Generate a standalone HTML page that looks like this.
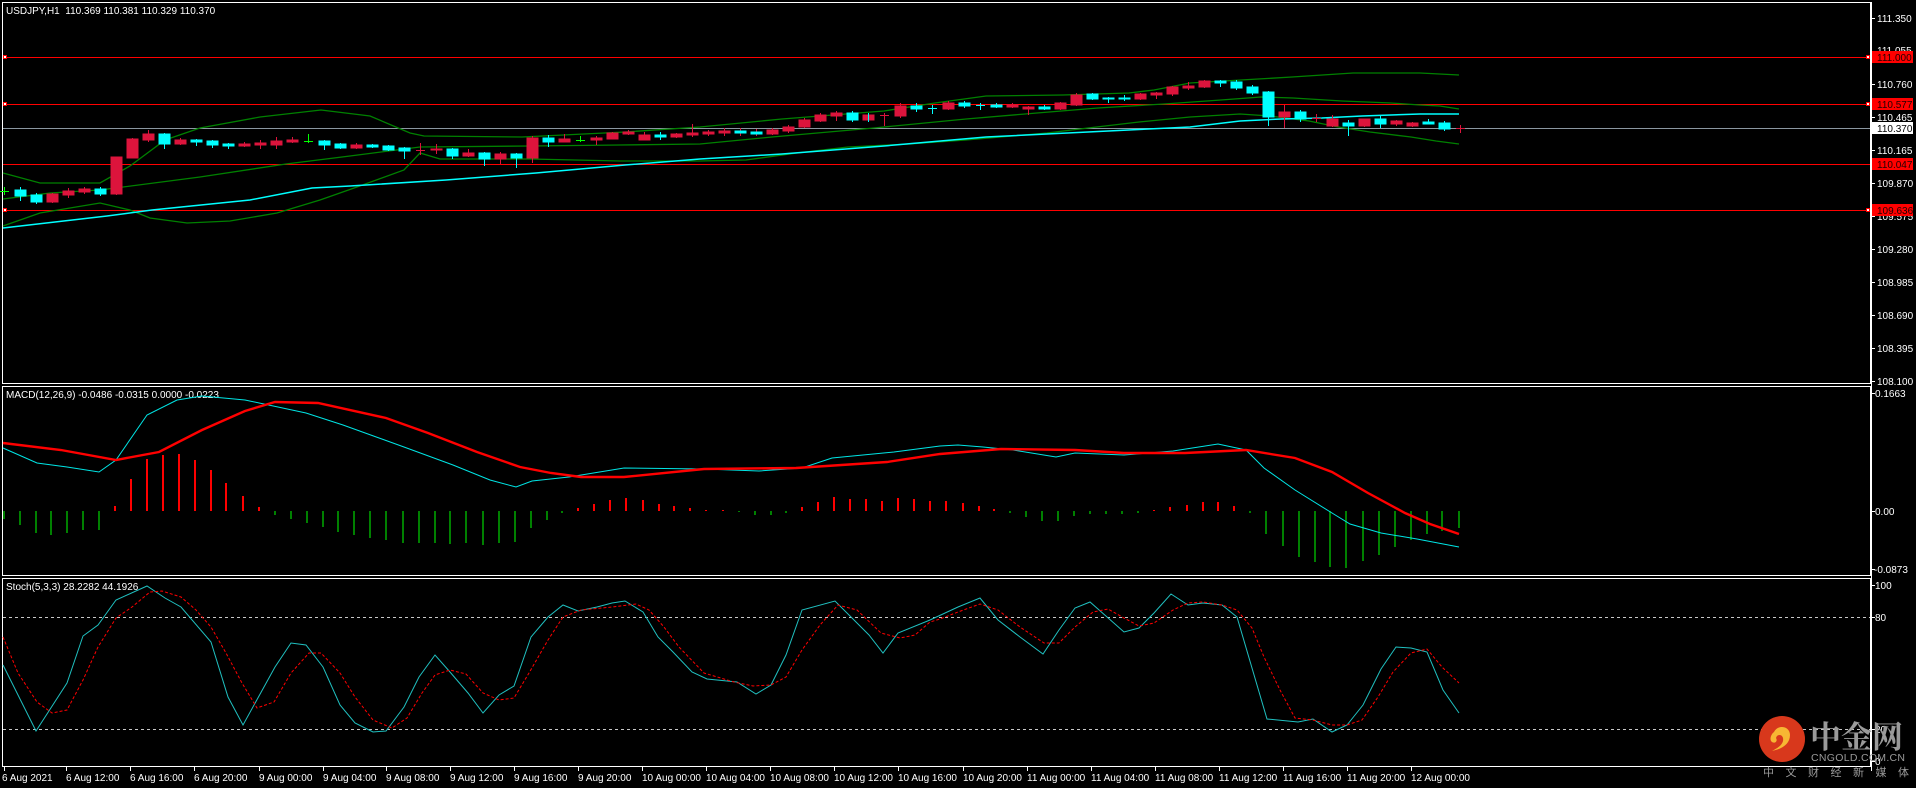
<!DOCTYPE html>
<html><head><meta charset="utf-8"><style>
html,body{margin:0;padding:0;background:#000;width:1916px;height:788px;overflow:hidden}
svg{display:block}
text{font-family:"Liberation Sans",sans-serif;font-size:10px;fill:#fff}
</style></head><body>
<svg width="1916" height="788" viewBox="0 0 1916 788" xmlns="http://www.w3.org/2000/svg" shape-rendering="crispEdges">
<rect width="1916" height="788" fill="#000"/>
<g fill="none" stroke="#fff" stroke-width="1">
<rect x="2.5" y="2.5" width="1868" height="381"/>
<rect x="2.5" y="386.5" width="1868" height="189"/>
<rect x="2.5" y="578.5" width="1868" height="188"/>
</g>
<g stroke="#ff0000" stroke-width="1.3">
<line x1="3" y1="57.5" x2="1870" y2="57.5"/>
<line x1="3" y1="104.5" x2="1870" y2="104.5"/>
<line x1="3" y1="164.5" x2="1870" y2="164.5"/>
<line x1="3" y1="210.5" x2="1870" y2="210.5"/>
</g>
<line x1="3" y1="128.5" x2="1870" y2="128.5" stroke="#8a96a0" stroke-width="1"/>
<g fill="#fff" stroke="#f00" stroke-width="1">
<rect x="3.5" y="55.5" width="3" height="3"/><rect x="3.5" y="102.5" width="3" height="3"/><rect x="3.5" y="208.5" width="3" height="3"/>
<rect x="1866.5" y="55.5" width="3" height="3"/><rect x="1866.5" y="102.5" width="3" height="3"/><rect x="1866.5" y="208.5" width="3" height="3"/>
</g>
<g fill="none" stroke="#008000" stroke-width="1.3" shape-rendering="auto">
<polyline points="3,173 40,183 100,183 130,166 165,140 200,128 260,117 321,110 370,116 410,133 424,136 522,137 625,132 700,127 782,119 884,111 935,103 986,96 1063,95 1129,93 1154,90 1190,83 1241,80 1292,77 1353,73 1420,73 1459,75"/>
<polyline points="3,199 50,193 100,190 200,177 286,164 350,156 420,147 530,146 620,145 700,144 772,137 874,128 966,119 1037,113 1098,108 1164,104 1221,100 1261,97 1293,98 1342,101 1391,103 1420,105 1440,106 1459,109"/>
<polyline points="3,226 40,213 100,203 130,210 150,218 187,223 230,221 277,213 320,200 357,187 404,170 420,153 440,159 530,159 620,161 700,161 746,160 797,153 848,147 909,144 966,140 1047,133 1088,128 1139,122 1190,117 1240,114 1270,116 1309,121 1338,127 1370,132 1411,137 1436,141 1459,144"/>
</g>
<polyline fill="none" stroke="#00ffff" stroke-width="1.5" shape-rendering="auto" points="3,228 107,216 152,210 250,200 312,188 350,186 446,180 536,173 625,165 700,159 782,154 884,146 986,137 1088,132 1190,127 1240,121 1281,119 1322,118 1362,116 1420,114 1459,114"/>
<g stroke-width="1">
<g stroke="#00ff00"><path d="M4.5 187V195M0 191.5H9M308.5 134V143M304 141.5H313M580.5 136V142M576 140.5H585"/></g>
<g stroke="#dc143c" fill="#dc143c">
<path d="M52.5 193V203M68.5 188V198M84.5 187V194M116.5 157V195M132.5 138V158M148.5 130V142M180.5 138V145M244.5 142V147M260.5 140V149M276.5 137V149M292.5 137V143M356.5 143V149M420.5 143V155M436.5 144V154M468.5 149V157M500.5 152V164M532.5 136V163M564.5 134V142M596.5 136V145M612.5 132V139M628.5 130V135M644.5 132V140M676.5 133V138M692.5 124V137M708.5 130V136M724.5 128V136M740.5 128V136M756.5 129V136M772.5 128V135M788.5 125V133M804.5 118V128M820.5 113V122M836.5 111V121M852.5 111V122M868.5 113V122M884.5 113V126M900.5 103V118M916.5 103V112M948.5 101V110M964.5 101V108M1012.5 103V108M1028.5 106V115M1060.5 102V110M1076.5 93V106M1140.5 93V100M1156.5 92V99M1172.5 86V96M1188.5 82V90M1204.5 80V88M1284.5 105V128M1316.5 114V122M1332.5 115V124M1348.5 120V126M1364.5 119V127M1380.5 116V126M1396.5 120V126M1412.5 122V127M1460.5 125V133"/>
<path d="M416 150.5H425M1312 118.5H1321M1456 128.5H1465M880 115.5H889"/>
<rect x="47" y="194" width="11" height="8"/><rect x="63" y="191" width="11" height="4"/><rect x="79" y="189" width="11" height="3"/><rect x="111" y="157" width="11" height="37"/><rect x="127" y="139" width="11" height="19"/><rect x="143" y="134" width="11" height="6"/><rect x="175" y="140" width="11" height="4"/><rect x="239" y="144" width="11" height="2"/><rect x="255" y="143" width="11" height="2"/><rect x="271" y="141" width="11" height="4"/><rect x="287" y="140" width="11" height="2"/><rect x="351" y="145" width="11" height="3"/><rect x="431" y="149" width="11" height="1"/><rect x="463" y="153" width="11" height="3"/><rect x="495" y="154" width="11" height="5"/><rect x="527" y="138" width="11" height="20"/><rect x="559" y="139" width="11" height="3"/><rect x="591" y="138" width="11" height="2"/><rect x="607" y="133" width="11" height="6"/><rect x="623" y="132" width="11" height="2"/><rect x="639" y="135" width="11" height="5"/><rect x="671" y="134" width="11" height="3"/><rect x="687" y="133" width="11" height="2"/><rect x="703" y="132" width="11" height="2"/><rect x="719" y="131" width="11" height="2"/><rect x="767" y="130" width="11" height="4"/><rect x="783" y="127" width="11" height="4"/><rect x="799" y="120" width="11" height="7"/><rect x="815" y="115" width="11" height="6"/><rect x="831" y="113" width="11" height="3"/><rect x="863" y="115" width="11" height="5"/><rect x="895" y="106" width="11" height="10"/><rect x="943" y="103" width="11" height="6"/><rect x="1007" y="105" width="11" height="2"/><rect x="1023" y="107" width="11" height="2"/><rect x="1055" y="103" width="11" height="6"/><rect x="1071" y="95" width="11" height="10"/><rect x="1135" y="94" width="11" height="5"/><rect x="1151" y="93" width="11" height="2"/><rect x="1167" y="87" width="11" height="7"/><rect x="1183" y="86" width="11" height="2"/><rect x="1199" y="81" width="11" height="6"/><rect x="1279" y="112" width="11" height="5"/><rect x="1359" y="119" width="11" height="7"/><rect x="1391" y="121" width="11" height="3"/><rect x="1407" y="123" width="11" height="3"/>
</g>
<g stroke="#00ffff" fill="#00ffff">
<path d="M20.5 187V201M36.5 193V204M100.5 187V196M164.5 133V149M196.5 139V146M212.5 140V148M228.5 143V149M324.5 140V150M340.5 143V149M372.5 144V148M388.5 145V151M404.5 147V159M452.5 148V159M484.5 152V166M516.5 153V168M548.5 135V147M660.5 132V140M852.5 111V122M868.5 113V122M916.5 103V112M932.5 105V114M964.5 101V108M980.5 103V110M996.5 103V108M1044.5 105V110M1092.5 93V100M1108.5 97V103M1124.5 95V101M1220.5 80V87M1236.5 80V90M1252.5 85V95M1268.5 91V126M1300.5 110V122M1348.5 120V136M1380.5 115V128M1428.5 119V124M1444.5 121V131M928 108.5H937M976 105.5H985"/>
<rect x="15" y="190" width="11" height="6"/><rect x="31" y="195" width="11" height="7"/><rect x="95" y="189" width="11" height="5"/><rect x="159" y="134" width="11" height="10"/><rect x="191" y="140" width="11" height="2"/><rect x="207" y="141" width="11" height="4"/><rect x="223" y="144" width="11" height="2"/><rect x="319" y="141" width="11" height="4"/><rect x="335" y="144" width="11" height="4"/><rect x="367" y="145" width="11" height="2"/><rect x="383" y="146" width="11" height="4"/><rect x="399" y="148" width="11" height="3"/><rect x="447" y="149" width="11" height="7"/><rect x="479" y="153" width="11" height="6"/><rect x="511" y="154" width="11" height="4"/><rect x="543" y="138" width="11" height="4"/><rect x="655" y="135" width="11" height="2"/><rect x="735" y="131" width="11" height="2"/><rect x="751" y="132" width="11" height="2"/><rect x="847" y="113" width="11" height="7"/><rect x="911" y="106" width="11" height="3"/><rect x="959" y="103" width="11" height="3"/><rect x="991" y="105" width="11" height="2"/><rect x="1039" y="107" width="11" height="2"/><rect x="1087" y="94" width="11" height="5"/><rect x="1103" y="98" width="11" height="1"/><rect x="1119" y="98" width="11" height="1"/><rect x="1215" y="81" width="11" height="2"/><rect x="1231" y="82" width="11" height="6"/><rect x="1247" y="87" width="11" height="6"/><rect x="1263" y="92" width="11" height="25"/><rect x="1295" y="112" width="11" height="7"/><rect x="1343" y="123" width="11" height="3"/><rect x="1375" y="119" width="11" height="5"/><rect x="1423" y="122" width="11" height="2"/><rect x="1439" y="123" width="11" height="6"/>
</g>
<g stroke="#dc143c" fill="#dc143c"><rect x="1327" y="119" width="11" height="7"/><path d="M1332.5 115V127"/></g>
</g>
<text x="6" y="14">USDJPY,H1&#160; 110.369 110.381 110.329 110.370</text>
<text x="6" y="398">MACD(12,26,9) -0.0486 -0.0315 0.0000 -0.0223</text>
<g stroke="#008000" stroke-width="2">
<path d="M4 511V519M20 511V525M36 511V533M51 511V535M67 511V533M83 511V530M99 511V530M275 511V515M291 511V519M307 511V523M323 511V527M338 511V532M354 511V535M370 511V538M386 511V540M403 511V543M419 511V543M435 511V543M450 511V544M466 511V543M483 511V545M499 511V543M515 511V542M531 511V528M547 511V520M562 511V513M739 511V512M755 511V515M771 511V515M786 511V513M1010 511V513M1026 511V517M1042 511V521M1058 511V521M1074 511V516M1090 511V514M1106 511V514M1122 511V514M1138 511V513M1250 511V513M1266 511V534M1283 511V546M1299 511V557M1315 511V562M1330 511V567M1346 511V568M1363 511V561M1379 511V555M1395 511V547M1411 511V540M1427 511V534M1442 511V531M1459 511V528"/>
</g>
<g stroke="#ff0000" stroke-width="2">
<path d="M115 511V506M131 511V479M147 511V459M163 511V455M179 511V454M195 511V460M211 511V470M226 511V483M243 511V496M259 511V507M578 511V508M594 511V504M610 511V500M626 511V498M643 511V500M659 511V504M674 511V506M690 511V508M706 511V510M723 511V510M802 511V507M818 511V502M834 511V497M850 511V499M866 511V499M882 511V501M898 511V498M914 511V499M930 511V501M946 511V501M963 511V503M979 511V506M994 511V509M1154 511V510M1170 511V507M1187 511V505M1203 511V502M1218 511V502M1234 511V506"/>
</g>
<polyline fill="none" stroke="#00e5e5" stroke-width="1" shape-rendering="auto" points="3,448 37,463 67,467 99,472 116,460 147,415 177,400 202,396 245,400 306,413 343,425 404,447 453,465 490,480 516,487 532,481 569,477 624,468 704,469 759,471 802,468 832,458 894,452 940,446 958,445 983,447 1013,450 1056,457 1075,453 1124,455 1173,451 1218,444 1246,450 1264,468 1295,490 1332,513 1350,524 1381,533 1417,539 1459,547"/>
<polyline fill="none" stroke="#ff0000" stroke-width="2.4" shape-rendering="auto" points="3,443 61,450 116,460 159,452 202,430 245,411 275,402 318,403 386,418 428,433 477,452 520,467 551,473 581,477 624,477 704,469 796,468 887,462 940,454 1001,449 1075,450 1124,453 1185,453 1246,450 1295,458 1332,472 1368,493 1405,513 1430,524 1459,534"/>
<text x="6" y="590">Stoch(5,3,3) 28.2282 44.1926</text>
<g stroke="#c8c8c8" stroke-width="1" stroke-dasharray="3,3"><line x1="3" y1="617.5" x2="1870" y2="617.5"/><line x1="3" y1="729.5" x2="1870" y2="729.5"/></g>
<polyline fill="none" stroke="#20c0c0" stroke-width="1" shape-rendering="auto" points="3,665 36,731 67,683 83,636 98,625 116,600 147,586 165,598 181,607 211,642 228,697 243,725 275,667 291,643 306,645 323,667 340,705 355,723 373,732 386,731 404,707 419,677 435,655 450,672 468,693 483,713 499,695 514,686 531,637 548,617 563,605 578,611 597,607 612,603 625,601 643,612 658,637 673,652 692,672 707,679 737,682 756,694 771,685 786,655 802,610 835,601 851,617 869,635 883,653 898,633 930,620 958,607 980,598 998,620 1020,637 1043,654 1059,630 1075,608 1090,602 1124,632 1139,628 1154,613 1171,594 1188,605 1203,603 1222,605 1237,617 1267,719 1298,722 1313,719 1332,732 1347,725 1363,705 1381,669 1396,647 1411,648 1427,652 1443,690 1459,713"/>
<polyline fill="none" stroke="#ff0000" stroke-width="1" stroke-dasharray="3,2" shape-rendering="auto" points="3,637 18,673 37,702 52,713 67,710 83,680 98,647 116,618 132,607 150,592 162,591 181,597 196,610 211,627 226,653 242,683 257,708 274,702 291,673 309,653 321,653 340,673 355,697 373,720 392,728 407,718 422,693 435,675 450,670 466,674 483,693 499,700 514,698 529,673 548,640 563,617 581,610 612,607 636,604 649,610 664,627 679,647 704,673 734,682 753,686 771,685 786,677 802,650 820,625 838,605 857,610 881,633 900,638 915,635 930,622 940,619 958,612 980,604 998,610 1020,627 1044,643 1059,643 1075,627 1093,612 1108,609 1124,618 1139,626 1154,623 1173,610 1188,603 1203,602 1222,605 1237,610 1252,628 1264,657 1280,690 1295,718 1313,720 1332,725 1347,725 1362,720 1378,697 1393,672 1411,653 1427,649 1442,667 1459,683"/>
<line x1="1871.5" y1="2" x2="1871.5" y2="771" stroke="#fff"/>
<g stroke="#fff"><path d="M1871 18.5h4M1871 51.5h4M1871 84.5h4M1871 117.5h4M1871 150.5h4M1871 183.5h4M1871 216.5h4M1871 249.5h4M1871 282.5h4M1871 315.5h4M1871 348.5h4M1871 381.5h4M1871 393.5h4M1871 511.5h4M1871 569.5h4M1871 585.5h4M1871 617.5h4M1871 729.5h4M1871 761.5h4"/></g>
<g>
<text x="1877" y="22">111.350</text><text x="1877" y="54">111.055</text><text x="1877" y="88">110.760</text><text x="1877" y="121">110.465</text><text x="1877" y="154">110.165</text><text x="1877" y="187">109.870</text><text x="1877" y="220">109.575</text><text x="1877" y="253">109.280</text><text x="1877" y="286">108.985</text><text x="1877" y="319">108.690</text><text x="1877" y="352">108.395</text><text x="1877" y="385">108.100</text>
<text x="1875" y="397">0.1663</text><text x="1875" y="515">0.00</text><text x="1874" y="573">-0.0873</text>
<text x="1875" y="589">100</text><text x="1875" y="621">80</text><text x="1875" y="733">20</text><text x="1875" y="765">0</text>
</g>
<rect x="1872" y="51" width="41" height="12" fill="#f00"/><text x="1877" y="61" style="fill:#200">111.000</text>
<rect x="1872" y="98" width="41" height="12" fill="#f00"/><text x="1877" y="108" style="fill:#200">110.577</text>
<rect x="1872" y="122" width="41" height="12" fill="#fff"/><text x="1877" y="132" style="fill:#000">110.370</text>
<rect x="1872" y="158" width="41" height="12" fill="#f00"/><text x="1877" y="168" style="fill:#200">110.047</text>
<rect x="1872" y="204" width="41" height="12" fill="#f00"/><text x="1877" y="214" style="fill:#200">109.636</text>
<g stroke="#fff"><path d="M4.5 767v4M66.5 767v4M130.5 767v4M194.5 767v4M259.5 767v4M323.5 767v4M386.5 767v4M450.5 767v4M514.5 767v4M578.5 767v4M642.5 767v4M706.5 767v4M770.5 767v4M834.5 767v4M898.5 767v4M963.5 767v4M1027.5 767v4M1091.5 767v4M1155.5 767v4M1219.5 767v4M1283.5 767v4M1347.5 767v4M1411.5 767v4"/></g>
<g>
<text x="2" y="781">6 Aug 2021</text><text x="66" y="781">6 Aug 12:00</text><text x="130" y="781">6 Aug 16:00</text><text x="194" y="781">6 Aug 20:00</text><text x="259" y="781">9 Aug 00:00</text><text x="323" y="781">9 Aug 04:00</text><text x="386" y="781">9 Aug 08:00</text><text x="450" y="781">9 Aug 12:00</text><text x="514" y="781">9 Aug 16:00</text><text x="578" y="781">9 Aug 20:00</text><text x="642" y="781">10 Aug 00:00</text><text x="706" y="781">10 Aug 04:00</text><text x="770" y="781">10 Aug 08:00</text><text x="834" y="781">10 Aug 12:00</text><text x="898" y="781">10 Aug 16:00</text><text x="963" y="781">10 Aug 20:00</text><text x="1027" y="781">11 Aug 00:00</text><text x="1091" y="781">11 Aug 04:00</text><text x="1155" y="781">11 Aug 08:00</text><text x="1219" y="781">11 Aug 12:00</text><text x="1283" y="781">11 Aug 16:00</text><text x="1347" y="781">11 Aug 20:00</text><text x="1411" y="781">12 Aug 00:00</text>
</g>
<g shape-rendering="auto">
<circle cx="1782" cy="739" r="23" fill="#d8381c"/>
<path d="M1774 732c4-8 16-6 16 3 0 9-8 14-18 16 8-4 12-8 11-13-1-4-6-4-7 0 2 3-1 6-4 4-3-2-1-8 2-10z" fill="#f7b733"/>
</g>
<text x="1810" y="748" style="font-family:'Noto Serif CJK SC','Noto Sans CJK SC',serif;font-size:31px;font-weight:bold;fill:#9a9a9a">中金网</text>
<text x="1811" y="761" style="font-size:10.5px;fill:#9a9a9a;letter-spacing:0.3px">CNGOLD.COM.CN</text>
<text x="1763" y="776" style="font-family:'Noto Sans CJK SC',sans-serif;font-size:11px;fill:#9a9a9a;letter-spacing:11.5px">中文财经新媒体</text>
</svg>
</body></html>
